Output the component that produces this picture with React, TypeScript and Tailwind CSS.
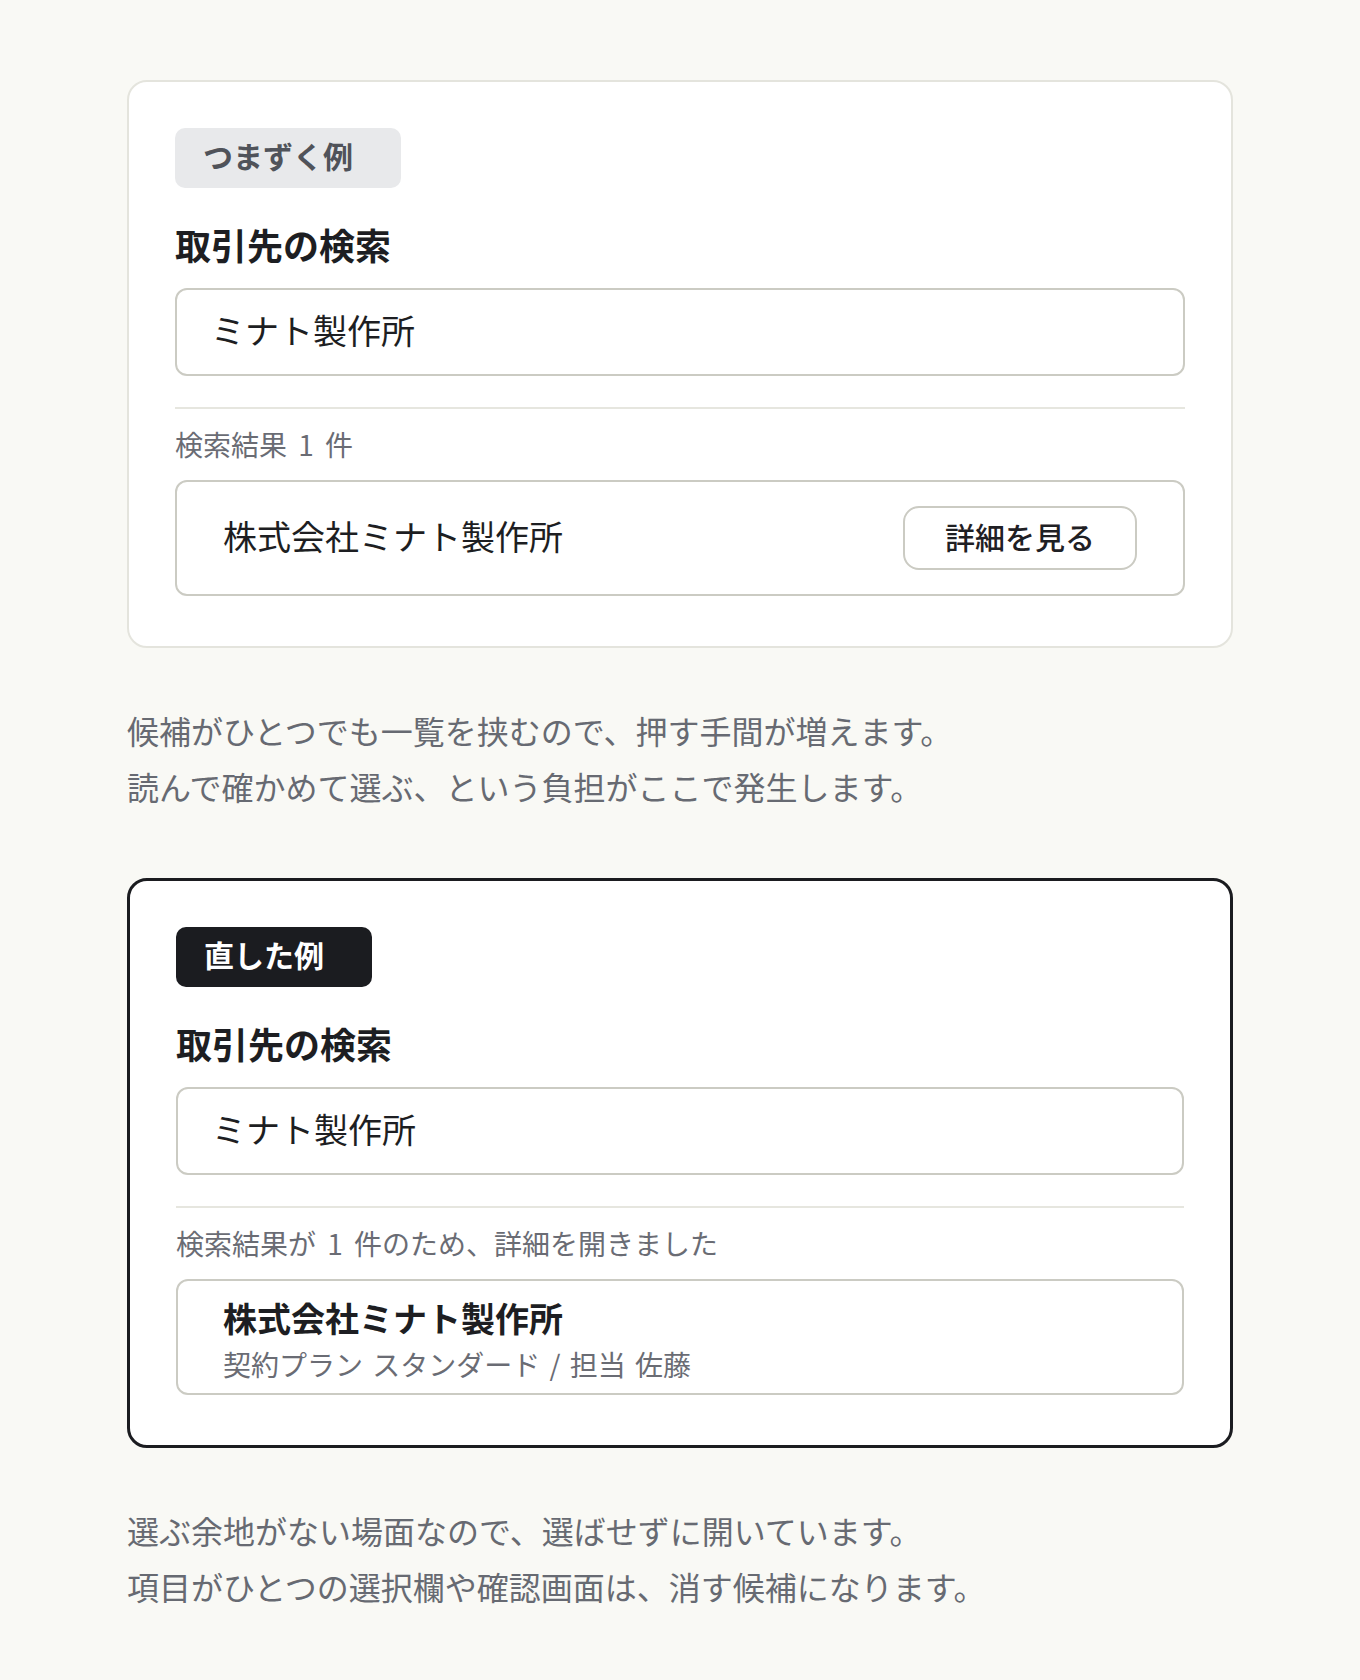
import React from 'react';

const font = { fontFamily: '"Noto Sans CJK JP", "Noto Sans", sans-serif' };

function Badge({ label, dark }: { label: string; dark?: boolean }) {
    return (
        <div
            className={`inline-flex h-[60px] items-center rounded-[10px] pl-[28px] pr-[48px] pb-[5px] text-[30px] font-bold ${dark ? 'bg-[#1b1c20] text-white' : 'bg-[#e8e9eb] text-[#50535a]'
                }`}
        >
            {label}
        </div>
    );
}

function SearchCard({ fixed }: { fixed?: boolean }) {
    return (
        <div
            className={`w-[1106px] mx-auto bg-white rounded-[20px] px-[46px] pt-[46px] pb-[50px] ${fixed ? 'border-[3px] border-[#1b1c20]' : 'border-2 border-[#e4e4dd]'
                }`}
        >
            <Badge label={fixed ? '直した例' : 'つまずく例'} dark={fixed} />
            <h2 className="mt-[30px] text-[36px] leading-[52px] font-bold text-[#1d1e22]">取引先の検索</h2>
            <div className="mt-[18px] h-[88px] flex items-center rounded-[12px] border-2 border-[#cbcbc3] pl-[34px] pb-[5px] text-[34px] text-[#1d1e22]">
                ミナト製作所
            </div>
            <div className="mt-[31px] h-[2px] bg-[#e6e6df]" />
            <p className="mt-[14px] text-[28px] leading-[42px] text-[#6a6c74] [word-spacing:5px]">
                {fixed ? '検索結果が 1 件のため、詳細を開きました' : '検索結果 1 件'}
            </p>
            {fixed ? (
                <div className="mt-[15px] h-[116px] rounded-[12px] border-2 border-[#cbcbc3] px-[45px] pt-[14px]">
                    <div className="text-[34px] leading-[46px] font-bold text-[#1d1e22]">株式会社ミナト製作所</div>
                    <div className="mt-[3px] text-[28px] leading-[40px] text-[#6a6c74] [word-spacing:3px]">
                        契約プラン スタンダード / 担当 佐藤
                    </div>
                </div>
            ) : (
                <div className="mt-[15px] h-[116px] flex items-center justify-between rounded-[12px] border-2 border-[#cbcbc3] px-[46px]">
                    <span className="pb-[5px] text-[34px] text-[#1d1e22]">株式会社ミナト製作所</span>
                    <button className="h-[64px] rounded-[16px] border-2 border-[#cbcbc3] bg-white px-[40px] pb-[4px] text-[30px] font-medium text-[#1f2024]">
                        詳細を見る
                    </button>
                </div>
            )}
        </div>
    );
}

export default function App() {
    return (
        <div className="min-h-[1680px] bg-[#f9f9f5] pt-[80px] pb-[64px]" style={font}>
            <SearchCard />
            <p className="w-[1106px] mx-auto mt-[54px] text-[32px] leading-[56px] text-[#676a72]">
                候補がひとつでも一覧を挟むので、押す手間が増えます。
                <br />
                読んで確かめて選ぶ、という負担がここで発生します。
            </p>
            <div className="mt-[64px]">
                <SearchCard fixed />
            </div>
            <p className="w-[1106px] mx-auto mt-[54px] text-[32px] leading-[56px] text-[#676a72]">
                選ぶ余地がない場面なので、選ばせずに開いています。
                <br />
                項目がひとつの選択欄や確認画面は、消す候補になります。
            </p>
        </div>
    );
}
